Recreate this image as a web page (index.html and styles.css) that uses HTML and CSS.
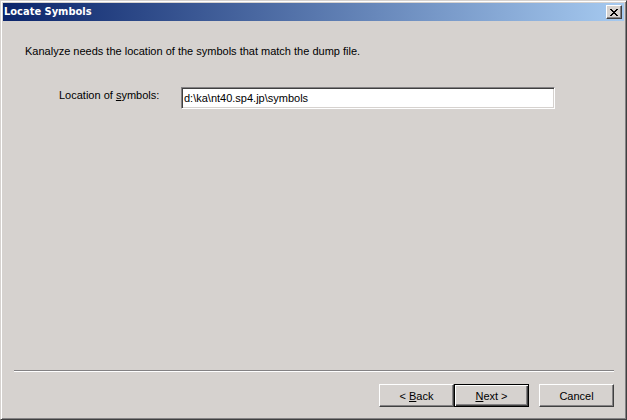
FILE: index.html
```html
<!DOCTYPE html>
<html lang="en">
<head>
<meta charset="utf-8">
<title>Locate Symbols</title>
<link rel="stylesheet" href="styles.css">
</head>
<body>
<main class="window">
  <header class="titlebar">
    <h1 class="title">Locate Symbols</h1>
    <button class="close" type="button" aria-label="Close">
      <svg width="8" height="7" viewBox="0 0 8 7" shape-rendering="crispEdges" aria-hidden="true">
        <path d="M0 0h2v1h1v1h2v-1h1v-1h2v1h-1v1h-1v1h-1v1h1v1h1v1h1v1h-2v-1h-1v-1h-2v1h-1v1h-2v-1h1v-1h1v-1h1v-1h-1v-1h-1v-1h-1z"/>
      </svg>
    </button>
  </header>
  <form class="page">
    <p class="intro">Kanalyze needs the location of the symbols that match the dump file.</p>
    <div class="field">
      <label class="label" for="symbols">Location of <u>s</u>ymbols:</label>
      <input class="path" id="symbols" type="text" value="d:\ka\nt40.sp4.jp\symbols" spellcheck="false">
    </div>
    <footer class="actions">
      <button class="button" type="button">&lt; <u>B</u>ack</button>
      <button class="button default" type="submit"><u>N</u>ext &gt;</button>
      <button class="button cancel" type="button">Cancel</button>
    </footer>
  </form>
</main>
</body>
</html>
```
FILE: styles.css
```css
* {
  box-sizing: border-box;
}

body {
  margin: 0;
  background: #d6d2cf;
  color: #000;
  font: 11px/16px "Liberation Sans", Arial, sans-serif;
}

.window {
  display: flex;
  flex-direction: column;
  min-height: 100vh;
  padding: 1px;
  border: 1px solid;
  border-color: #d6d2cf #404040 #404040 #d6d2cf;
  box-shadow: inset 1px 1px #fff, inset -1px -1px #848284;
}

.titlebar {
  display: flex;
  align-items: center;
  justify-content: space-between;
  height: 18px;
  margin: 1px 1px 0;
  padding: 0 2px 0 1px;
  background: linear-gradient(to right, #0a246a, #a6caf0);
}

.title {
  margin: 0;
  color: #fff;
  font: bold 11px/18px "DejaVu Sans Condensed", "DejaVu Sans", sans-serif;
}

.close {
  display: flex;
  align-items: center;
  justify-content: center;
  width: 16px;
  height: 14px;
  padding: 0;
  border: 1px solid;
  border-color: #fff #404040 #404040 #fff;
  background: #d6d2cf;
  box-shadow: inset -1px -1px #848284;
}

.page {
  display: flex;
  flex: 1;
  flex-direction: column;
  padding: 22px 11px 11px 12px;
}

.intro {
  margin: 0 11px 28px;
}

.field {
  display: flex;
  margin: 0 59px 0 45px;
}

.label {
  width: 122px;
}

.path {
  flex: 1;
  min-width: 0;
  height: 22px;
  padding: 0 2px;
  border: 1px solid;
  border-color: #848284 #fff #fff #848284;
  background: #fff;
  box-shadow: inset 1px 1px #404040, inset -1px -1px #d6d2cf;
  color: #000;
  font: inherit;
  outline: none;
}

.actions {
  display: flex;
  justify-content: flex-end;
  margin-top: auto;
  padding-top: 13px;
  border-top: 1px solid #848284;
  box-shadow: inset 0 1px #fff;
}

.button {
  width: 75px;
  height: 23px;
  padding: 0;
  border: 1px solid;
  border-color: #fff #404040 #404040 #fff;
  background: #d6d2cf;
  box-shadow: inset -1px -1px #848284;
  color: #000;
  font: inherit;
}

.default {
  border-color: #000;
  box-shadow: inset 1px 1px #fff, inset -1px -1px #404040, inset -2px -2px #848284;
}

.cancel {
  margin-left: 10px;
}
```
